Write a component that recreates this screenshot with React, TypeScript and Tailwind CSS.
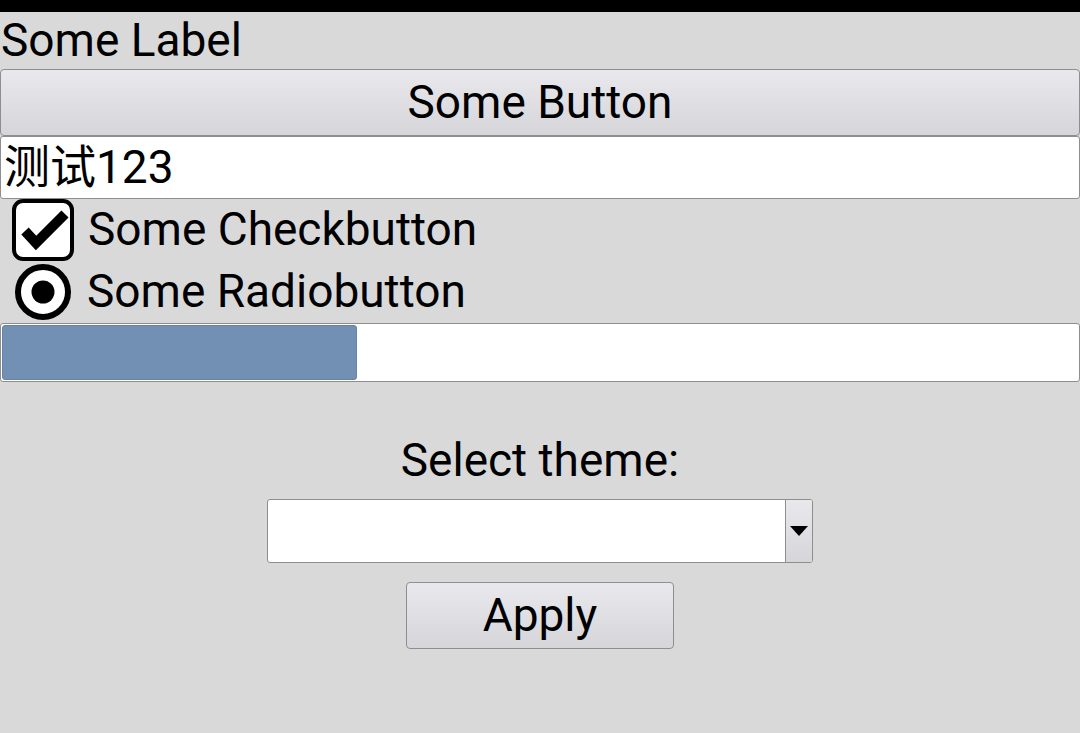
import React from "react";

const font = { fontFamily: "Roboto, 'Noto Sans CJK SC', sans-serif" };

function Check() {
  return (
    <svg width="62" height="62" viewBox="0 0 62 62" className="shrink-0">
      <rect x="2" y="2" width="58" height="58" rx="9" fill="white" stroke="black" strokeWidth="4" />
      <path d="M13 32 L24 44 L53 15" fill="none" stroke="black" strokeWidth="10" strokeLinejoin="miter" />
    </svg>
  );
}

function Radio() {
  return (
    <svg width="58" height="58" viewBox="0 0 58 58" className="shrink-0">
      <circle cx="29" cy="29" r="25" fill="white" stroke="black" strokeWidth="6" />
      <circle cx="29" cy="29" r="11.5" fill="black" />
    </svg>
  );
}

function TkButton({ children, className }: { children: React.ReactNode; className?: string }) {
  return (
    <div
      className={
        "flex items-center justify-center rounded-[4px] border border-[#8e8e8e] bg-gradient-to-b from-[#e9e9ed] to-[#d6d6da] pb-[2px] text-[46px] leading-none text-black " +
        (className ?? "")
      }
    >
      {children}
    </div>
  );
}

export default function App() {
  return (
    <div className="flex h-[733px] w-[1080px] flex-col bg-[#d9d9d9] text-black" style={font}>
      <div className="h-[12px] bg-black" />
      <div className="flex h-[57px] items-center pb-[2px] pl-[1px] text-[46px] leading-none">Some Label</div>
      <TkButton className="h-[67px] w-full">Some Button</TkButton>
      <div className="flex h-[63px] items-center rounded-[3px] border border-[#8e8e8e] bg-white pb-[2px] pl-[3px] text-[46px] leading-none">
        测试123
      </div>
      <div className="flex h-[62px] items-center gap-[14px] pl-[12px] text-[46px] leading-none">
        <Check />
        <span className="pb-[2px]">Some Checkbutton</span>
      </div>
      <div className="flex h-[62px] items-center gap-[15px] pl-[14px] text-[46px] leading-none">
        <Radio />
        <span className="pb-[2px]">Some Radiobutton</span>
      </div>
      <div className="flex h-[59px] rounded-[3px] border border-[#8e8e8e] bg-white p-px">
        <div className="h-full w-[355px] rounded-[3px] border border-[#6683a6] bg-[#7190b4]" />
      </div>
      <div className="flex flex-col items-center pt-[40px]">
        <div className="flex h-[77px] items-center pb-[2px] text-[46px] leading-none">Select theme:</div>
        <div className="flex h-[64px] w-[546px] overflow-hidden rounded-[3px] border border-[#8e8e8e] bg-white">
          <div className="flex-1" />
          <div className="flex w-[27px] items-center justify-center border-l border-[#8e8e8e] bg-gradient-to-b from-[#e9e9ed] to-[#d6d6da]">
            <svg width="18" height="10" viewBox="0 0 18 10">
              <path d="M0 0 H18 L9 10 Z" fill="black" />
            </svg>
          </div>
        </div>
        <TkButton className="mt-[19px] h-[67px] w-[268px]">Apply</TkButton>
      </div>
    </div>
  );
}
